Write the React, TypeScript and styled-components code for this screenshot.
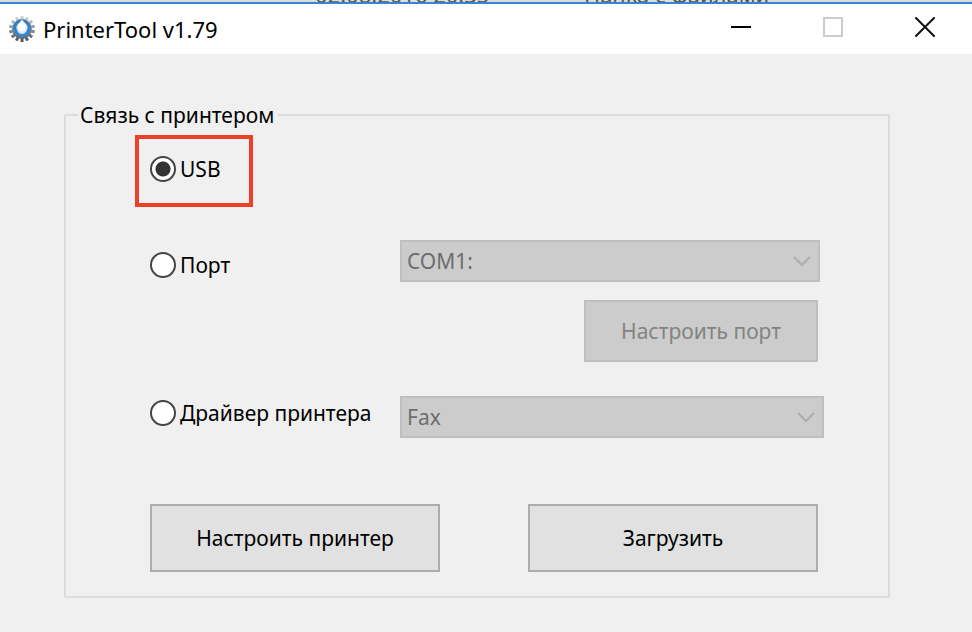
import React, { useState } from "react";
import styled, { createGlobalStyle } from "styled-components";

const GlobalStyle = createGlobalStyle`
  * { box-sizing: border-box; }
  body {
    margin: 0;
    background: #f0f0f0;
    color: #000;
    font-family: "Noto Sans", "Open Sans", sans-serif;
    font-size: 21px;
    line-height: 26px;
  }
  button, input, select { font: inherit; color: inherit; }
`;

const Backdrop = styled.div`
  display: flex;
  align-items: flex-end;
  height: 2px;
  padding-left: 315px;
  overflow: hidden;
  background: #dcdfe1;
  color: #555;
  white-space: nowrap;
`;

const BackdropCell = styled.span<{ $width?: number }>`
  flex: none;
  width: ${(p) => (p.$width ? `${p.$width}px` : "auto")};
  height: 24px;
  font-size: 22px;
  line-height: 32px;
`;

const Window = styled.div`
  border-top: 2px solid #3584d6;
`;

const TitleBar = styled.header`
  display: flex;
  align-items: center;
  height: 50px;
  padding: 0 1px 0 8px;
  background: #fff;
`;

const Title = styled.h1`
  flex: 1;
  margin: 0 0 0 7px;
  font-size: 22px;
  font-weight: 400;
  line-height: 32px;
`;

const CaptionButton = styled.button`
  display: flex;
  align-items: center;
  justify-content: center;
  width: 92px;
  height: 50px;
  padding: 0 0 4px;
  border: 0;
  background: transparent;
`;

const Content = styled.main`
  padding: 48px 82px 34px 64px;
`;

const Group = styled.fieldset`
  margin: 0;
  min-width: 0;
  padding: 7px 64px 24px 84px;
  border: 2px solid #dcdcdc;
`;

const Legend = styled.legend`
  margin-left: -72px;
  padding: 0 4px 0 2px;
`;

const Highlight = styled.div`
  width: 118px;
  margin: 0 0 33px -15px;
  padding: 13px 0 17px 11px;
  border: 4px solid #ed4028;
`;

const Row = styled.div<{ $align: "start" | "end"; $inset?: number }>`
  display: grid;
  grid-template-columns: 250px minmax(0, 1fr);
  align-items: ${(p) => p.$align};
  padding-right: ${(p) => p.$inset ?? 0}px;
`;

const RadioLabel = styled.label`
  display: flex;
  align-items: center;
  gap: 4px;
  height: 34px;
  white-space: nowrap;
`;

const Radio = styled.input`
  appearance: none;
  flex: none;
  width: 26px;
  height: 26px;
  margin: 0;
  border: 2px solid #444;
  border-radius: 50%;
  background: #fff;
  &:checked {
    background: radial-gradient(circle, #333 0 7px, #fff 8px);
  }
`;

const SelectBox = styled.div`
  position: relative;
  svg {
    position: absolute;
    top: 15px;
    right: 9px;
    pointer-events: none;
  }
`;

const Select = styled.select`
  display: block;
  appearance: none;
  width: 100%;
  height: 42px;
  padding: 0 32px 0 5px;
  border: 2px solid #bfbfbf;
  border-radius: 0;
  background: #ccc;
  &:disabled { color: #6d6d6d; opacity: 1; }
`;

const PortActions = styled.div`
  display: flex;
  justify-content: flex-end;
  padding: 18px 6px 34px 0;
`;

const Actions = styled.div`
  display: flex;
  justify-content: space-between;
  padding: 66px 6px 0 0;
`;

const PushButton = styled.button<{ $width: number; $height: number }>`
  width: ${(p) => p.$width}px;
  height: ${(p) => p.$height}px;
  padding: 0;
  border: 2px solid #adadad;
  background: #e1e1e1;
  &:disabled {
    border-color: #bfbfbf;
    background: #ccc;
    color: #838383;
  }
`;

const teeth = Array.from({ length: 14 }, (_, i) => (i * 360) / 14);

const GearIcon = () => (
  <svg width="28" height="30" viewBox="0 0 28 30" aria-hidden="true">
    <defs>
      <linearGradient id="rim" gradientUnits="userSpaceOnUse" x1="0" y1="2" x2="0" y2="28">
        <stop offset="0" stopColor="#d3d6d8" />
        <stop offset="0.5" stopColor="#8d9296" />
        <stop offset="1" stopColor="#4c5257" />
      </linearGradient>
      <linearGradient id="core" x1="0" y1="0" x2="0" y2="1">
        <stop offset="0" stopColor="#3f78ad" />
        <stop offset="1" stopColor="#2f8bdc" />
      </linearGradient>
      <radialGradient id="glow">
        <stop offset="0.5" stopColor="#fff" />
        <stop offset="1" stopColor="#c4dff5" />
      </radialGradient>
    </defs>
    <path
      d={teeth
        .map((a) => {
          const r = (a * Math.PI) / 180;
          const x = Math.sin(r);
          const y = -Math.cos(r);
          return `M${14 + x * 9} ${15 + y * 9}L${14 + x * 13} ${15 + y * 13}`;
        })
        .join("")}
      stroke="url(#rim)"
      strokeWidth="3"
    />
    <circle cx="14" cy="15" r="10" fill="url(#rim)" />
    <circle cx="14" cy="14" r="9" fill="url(#core)" />
    <path
      d="M14 5c1 2 2 3 4 5 2 2 2 4 1 6-1 3-3 4-5 4s-4-1-5-4c-1-2-1-4 1-6 2-2 3-3 4-5z"
      fill="url(#glow)"
    />
  </svg>
);

const Chevron = () => (
  <svg width="18" height="12" viewBox="0 0 18 12" aria-hidden="true">
    <path d="M1 2l8 8 8-8" fill="none" stroke="#adadad" strokeWidth="2" />
  </svg>
);

type Connection = "usb" | "port" | "driver";

export default function App() {
  const [connection, setConnection] = useState<Connection>("usb");

  const option = (value: Connection, text: string) => (
    <RadioLabel>
      <Radio
        type="radio"
        name="connection"
        value={value}
        checked={connection === value}
        onChange={() => setConnection(value)}
      />
      {text}
    </RadioLabel>
  );

  return (
    <>
      <GlobalStyle />
      <Backdrop aria-hidden="true">
        <BackdropCell $width={269}>02.08.2016 20:35</BackdropCell>
        <BackdropCell>Папка с файлами</BackdropCell>
      </Backdrop>
      <Window>
        <TitleBar>
          <GearIcon />
          <Title>PrinterTool v1.79</Title>
          <CaptionButton aria-label="Свернуть">
            <svg width="20" height="20" viewBox="0 0 20 20">
              <path d="M0 10h20" stroke="#000" strokeWidth="2" />
            </svg>
          </CaptionButton>
          <CaptionButton aria-label="Развернуть" disabled>
            <svg width="20" height="20" viewBox="0 0 20 20">
              <rect x="1" y="1" width="18" height="18" fill="none" stroke="#ccc" strokeWidth="2" />
            </svg>
          </CaptionButton>
          <CaptionButton aria-label="Закрыть">
            <svg width="20" height="20" viewBox="0 0 20 20">
              <path d="M1 1l18 18M19 1L1 19" stroke="#111" strokeWidth="2" strokeLinecap="square" />
            </svg>
          </CaptionButton>
        </TitleBar>
        <Content>
          <Group>
            <Legend>Связь с принтером</Legend>
            <Highlight>{option("usb", "USB")}</Highlight>
            <Row $align="end" $inset={4}>
              {option("port", "Порт")}
              <SelectBox>
                <Select aria-label="Порт" disabled={connection !== "port"}>
                  <option>COM1:</option>
                </Select>
                <Chevron />
              </SelectBox>
            </Row>
            <PortActions>
              <PushButton $width={234} $height={62} disabled={connection !== "port"}>
                Настроить порт
              </PushButton>
            </PortActions>
            <Row $align="start">
              {option("driver", "Драйвер принтера")}
              <SelectBox>
                <Select aria-label="Драйвер принтера" disabled={connection !== "driver"}>
                  <option>Fax</option>
                </Select>
                <Chevron />
              </SelectBox>
            </Row>
            <Actions>
              <PushButton $width={290} $height={68}>Настроить принтер</PushButton>
              <PushButton $width={290} $height={68}>Загрузить</PushButton>
            </Actions>
          </Group>
        </Content>
      </Window>
    </>
  );
}
